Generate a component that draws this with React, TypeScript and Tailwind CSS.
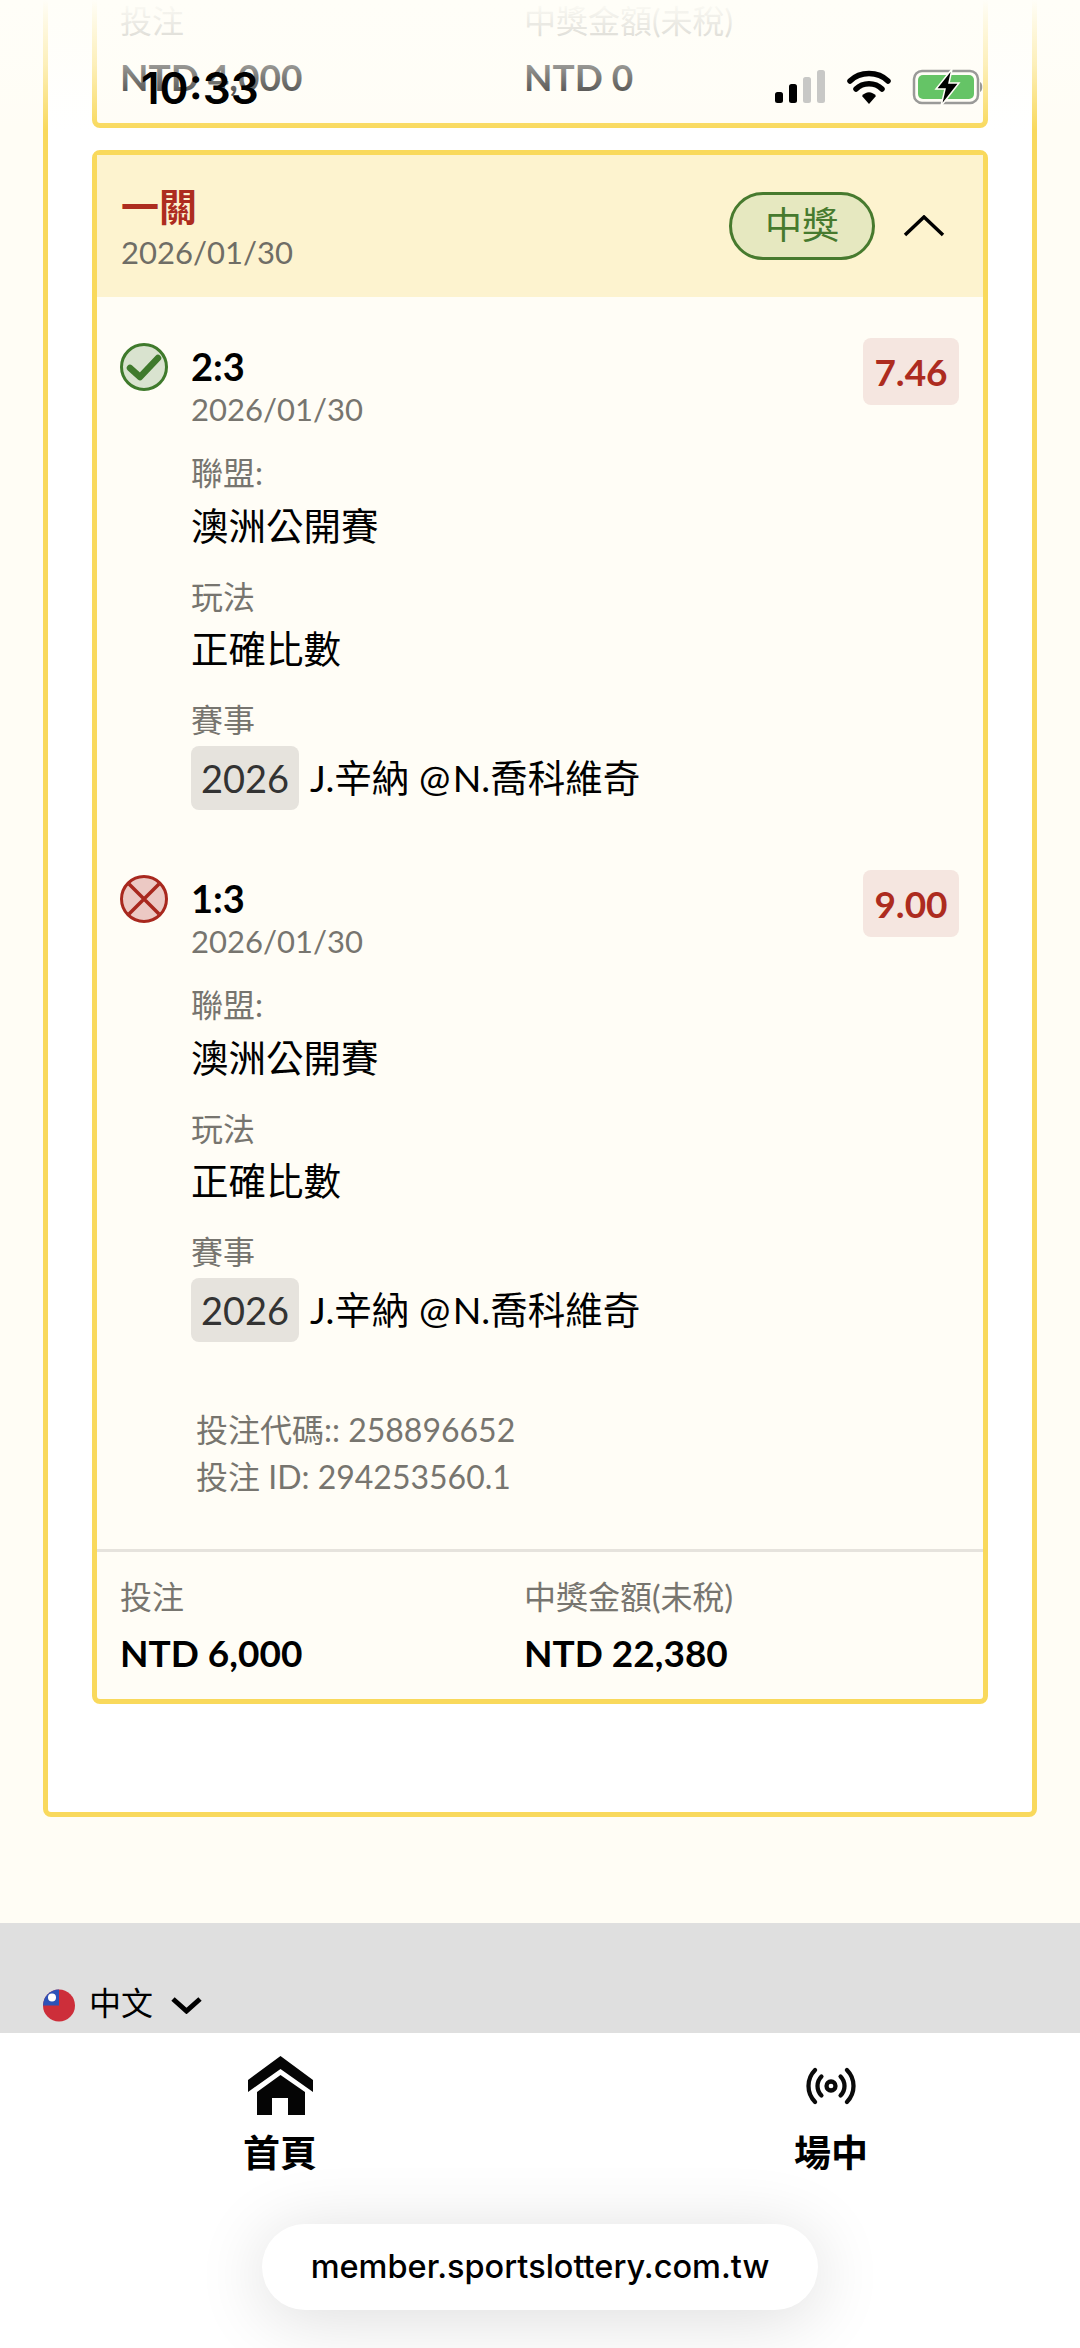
import React from 'react';
import { Radio } from 'lucide-react';

const Label = ({ children, className = '' }: { children: React.ReactNode; className?: string }) => (
  <div className={`h-[40px] text-[32px] leading-[40px] text-[#77756f] ${className}`}>{children}</div>
);

const Value = ({ children, className = '' }: { children: React.ReactNode; className?: string }) => (
  <div className={`h-[48px] text-[37.5px] leading-[48px] text-black ${className}`}>{children}</div>
);

const CheckIcon = () => (
  <svg width="48" height="48" viewBox="0 0 48 48">
    <circle cx="24" cy="24" r="22.5" fill="#d9e3cf" stroke="#3f7a2c" strokeWidth="3" />
    <path d="M10 25 L20 34 L38 15" fill="none" stroke="#3f7a2c" strokeWidth="6.5" strokeLinecap="round" strokeLinejoin="round" />
  </svg>
);

const CrossIcon = () => (
  <svg width="48" height="48" viewBox="0 0 48 48">
    <circle cx="24" cy="24" r="22.5" fill="#ecc9c4" stroke="#a8281e" strokeWidth="3" />
    <path d="M9 9 L39 39 M39 9 L9 39" fill="none" stroke="#a8281e" strokeWidth="3.5" />
  </svg>
);

const Selection = ({ score, odds, won }: { score: string; odds: string; won: boolean }) => (
  <div className="flex pl-[23px] pr-[24px]">
    <div className="w-[71px] pt-[5px] shrink-0">{won ? <CheckIcon /> : <CrossIcon />}</div>
    <div className="flex-1">
      <div className="flex justify-between">
        <div className="h-[56px] text-[38px] leading-[56px] font-bold text-black">{score}</div>
        <div className="h-[67px] w-[96px] rounded-[8px] bg-[#f5e6e0] text-center text-[37px] leading-[67px] font-bold text-[#ad2c1f]">{odds}</div>
      </div>
      <div className="-mt-[10px] h-[28px] text-[31px] leading-[28px] text-[#77756f]">2026/01/30</div>
      <Label className="mt-[30px]">聯盟:</Label>
      <Value className="mt-[9px]">澳洲公開賽</Value>
      <Label className="mt-[27px]">玩法</Label>
      <Value className="mt-[8px]">正確比數</Value>
      <Label className="mt-[27px]">賽事</Label>
      <div className="mt-[6px] flex items-center">
        <span className="h-[64px] w-[108px] rounded-[8px] bg-[#e6e3dd] text-center text-[38px] leading-[64px] text-[#333]">2026</span>
        <span className="ml-[11px] text-[37.5px] leading-[64px] text-black">J.辛納 @{'\u200a'}N.喬科維奇</span>
      </div>
    </div>
  </div>
);

const CardFooter = ({ stake, payout }: { stake: string; payout: string }) => (
  <div className="flex h-[147px] pl-[23px] pt-[25px]">
    <div className="w-[404px]">
      <Label>投注</Label>
      <div className="mt-[13px] h-[46px] text-[37px] leading-[46px] font-bold text-black">{stake}</div>
    </div>
    <div>
      <Label>中獎金額(未稅)</Label>
      <div className="mt-[13px] h-[46px] text-[37px] leading-[46px] font-bold text-black">{payout}</div>
    </div>
  </div>
);

const StatusIcons = () => (
  <svg width="212" height="38" viewBox="0 0 212 38">
    <rect x="0" y="23" width="8" height="11" rx="2.5" fill="#000" />
    <rect x="14" y="15" width="8" height="19" rx="2.5" fill="#000" />
    <rect x="28" y="8" width="8" height="26" rx="2.5" fill="#c8c8c6" />
    <rect x="42" y="1" width="8" height="33" rx="2.5" fill="#c8c8c6" />
    <path d="M75 12 C 85 2, 103 2, 113 12" fill="none" stroke="#000" strokeWidth="5.5" strokeLinecap="round" />
    <path d="M81 20 C 88 13, 100 13, 107 20" fill="none" stroke="#000" strokeWidth="5.5" strokeLinecap="round" />
    <path d="M87 27 L94 35 L101 27 C 97 22, 91 22, 87 27 Z" fill="#000" />
    <rect x="139" y="2" width="64" height="32" rx="8" fill="none" stroke="#9a9a98" strokeWidth="2.5" />
    <rect x="143" y="6" width="56" height="24" rx="5" fill="#65c466" />
    <path d="M205 13 C 208 14, 208 22, 205 23 Z" fill="#9a9a98" />
    <path d="M177 0 L161 20 L170 20 L166 37 L184 14 L174 14 Z" fill="#000" stroke="#fffef8" strokeWidth="1.5" />
  </svg>
);

const HomeIcon = () => (
  <svg width="65" height="59" viewBox="0 0 65 59">
    <path d="M32.5 0 L65 24 L65 36 L32.5 13 L0 36 L0 24 Z" fill="#050505" />
    <path d="M32.5 19 L57 36 L57 59 L40 59 L40 42 L24 42 L24 59 L9 59 L9 36 Z" fill="#050505" />
  </svg>
);

const FlagIcon = () => (
  <svg width="32" height="33" viewBox="0 0 32 33">
    <defs>
      <clipPath id="flag-clip">
        <circle cx="16" cy="16.5" r="16" />
      </clipPath>
    </defs>
    <g clipPath="url(#flag-clip)">
      <rect width="32" height="33" fill="#cd2e3a" />
      <rect width="16" height="16.5" fill="#2d52b8" />
      <circle cx="9" cy="8.5" r="4" fill="#fff" />
    </g>
  </svg>
);

export default function App() {
  return (
    <div className="relative h-[2348px] w-[1080px] overflow-hidden bg-[#fffdf5] [font-family:Lato,'Noto_Sans_CJK_TC',sans-serif]">
      {/* outer card, its top is scrolled away */}
      <div className="mx-[43px] -mt-[39px] h-[1856px] rounded-[8px] border-[5px] border-[#f9d95c] bg-white px-[44px] pt-[5px]">
        <div className="rounded-[8px] border-[5px] border-[#f9d95c] bg-[#fffdf6]">
          <CardFooter stake="NTD 4,000" payout="NTD 0" />
        </div>
        <div className="mt-[22px] rounded-[8px] border-[5px] border-[#f9d95c] bg-[#fffdf6]">
          <div className="flex h-[142px] items-center justify-between bg-[#fdf3cf] pl-[24px] pr-[38px]">
            <div className="pt-[6px]">
              <div className="h-[46px] text-[38px] leading-[46px] font-bold text-[#ad2c1f]">一關</div>
              <div className="h-[46px] text-[31px] leading-[46px] text-[#6f6d66]">2026/01/30</div>
            </div>
            <div className="flex items-center">
              <div className="h-[68px] w-[146px] rounded-[34px] border-[3px] border-[#477a2e] bg-[#e6e8c0] text-center text-[37px] leading-[60px] text-[#477a2e]">中獎</div>
              <svg className="ml-[28px]" width="42" height="22" viewBox="0 0 42 22">
                <path d="M2 20 L21 2 L40 20" fill="none" stroke="#000" strokeWidth="3.5" />
              </svg>
            </div>
          </div>
          <div className="pt-[41px]">
            <Selection score="2:3" odds="7.46" won />
            <div className="h-[60px]" />
            <Selection score="1:3" odds="9.00" won={false} />
            <div className="mt-[64px] pl-[99px] text-[32px] leading-[47px] text-[#77756f]">
              <div>投注代碼:: 258896652</div>
              <div>投注 ID: 294253560.1</div>
            </div>
          </div>
          <div className="mt-[49px] h-[3px] bg-[#e6e3dd]" />
          <CardFooter stake="NTD 6,000" payout="NTD 22,380" />
        </div>
      </div>

      <div className="mt-[106px] flex h-[110px] items-end bg-[#dfdfdf] pb-[11px] pl-[43px]">
        <FlagIcon />
        <span className="relative top-[1px] ml-[14px] text-[32px] leading-[40px] text-black">中文</span>
        <svg className="mb-[8px] ml-[17px]" width="33" height="18" viewBox="0 0 33 18">
          <path d="M3 3 L16.5 15 L30 3" fill="none" stroke="#000" strokeWidth="5" />
        </svg>
      </div>

      <nav className="relative h-[315px] bg-white">
        <div className="flex pl-[180px] pt-[23px]">
          <div className="flex w-[200px] flex-col items-center">
            <div className="flex h-[59px] items-center"><HomeIcon /></div>
            <div className="mt-[15px] text-[37px] leading-[46px] font-bold text-black">首頁</div>
          </div>
          <div className="ml-[351px] flex w-[200px] flex-col items-center">
            <div className="flex h-[59px] items-center"><Radio size={54} strokeWidth={1.9} color="#0a0a0a" /></div>
            <div className="mt-[15px] text-[37px] leading-[46px] font-bold text-black">場中</div>
          </div>
        </div>
        <div className="absolute left-[262px] top-[191px] flex h-[86px] w-[556px] items-center justify-center rounded-[43px] bg-white shadow-[0_8px_70px_rgba(0,0,0,0.14)] [font-family:Inter,sans-serif] text-[32.5px] font-medium text-black">
          member.sportslottery.com.tw
        </div>
      </nav>

      {/* status bar over the page */}
      <div className="absolute inset-x-0 top-0 h-[130px] bg-linear-to-b from-[#fffef8] via-[#fffef8]/60 to-transparent" />
      <div className="absolute left-[141px] top-[62px] [font-family:Inter,sans-serif] text-[44px] leading-[52px] font-semibold text-black">10:33</div>
      <div className="absolute left-[775px] top-[69px]"><StatusIcons /></div>
    </div>
  );
}
